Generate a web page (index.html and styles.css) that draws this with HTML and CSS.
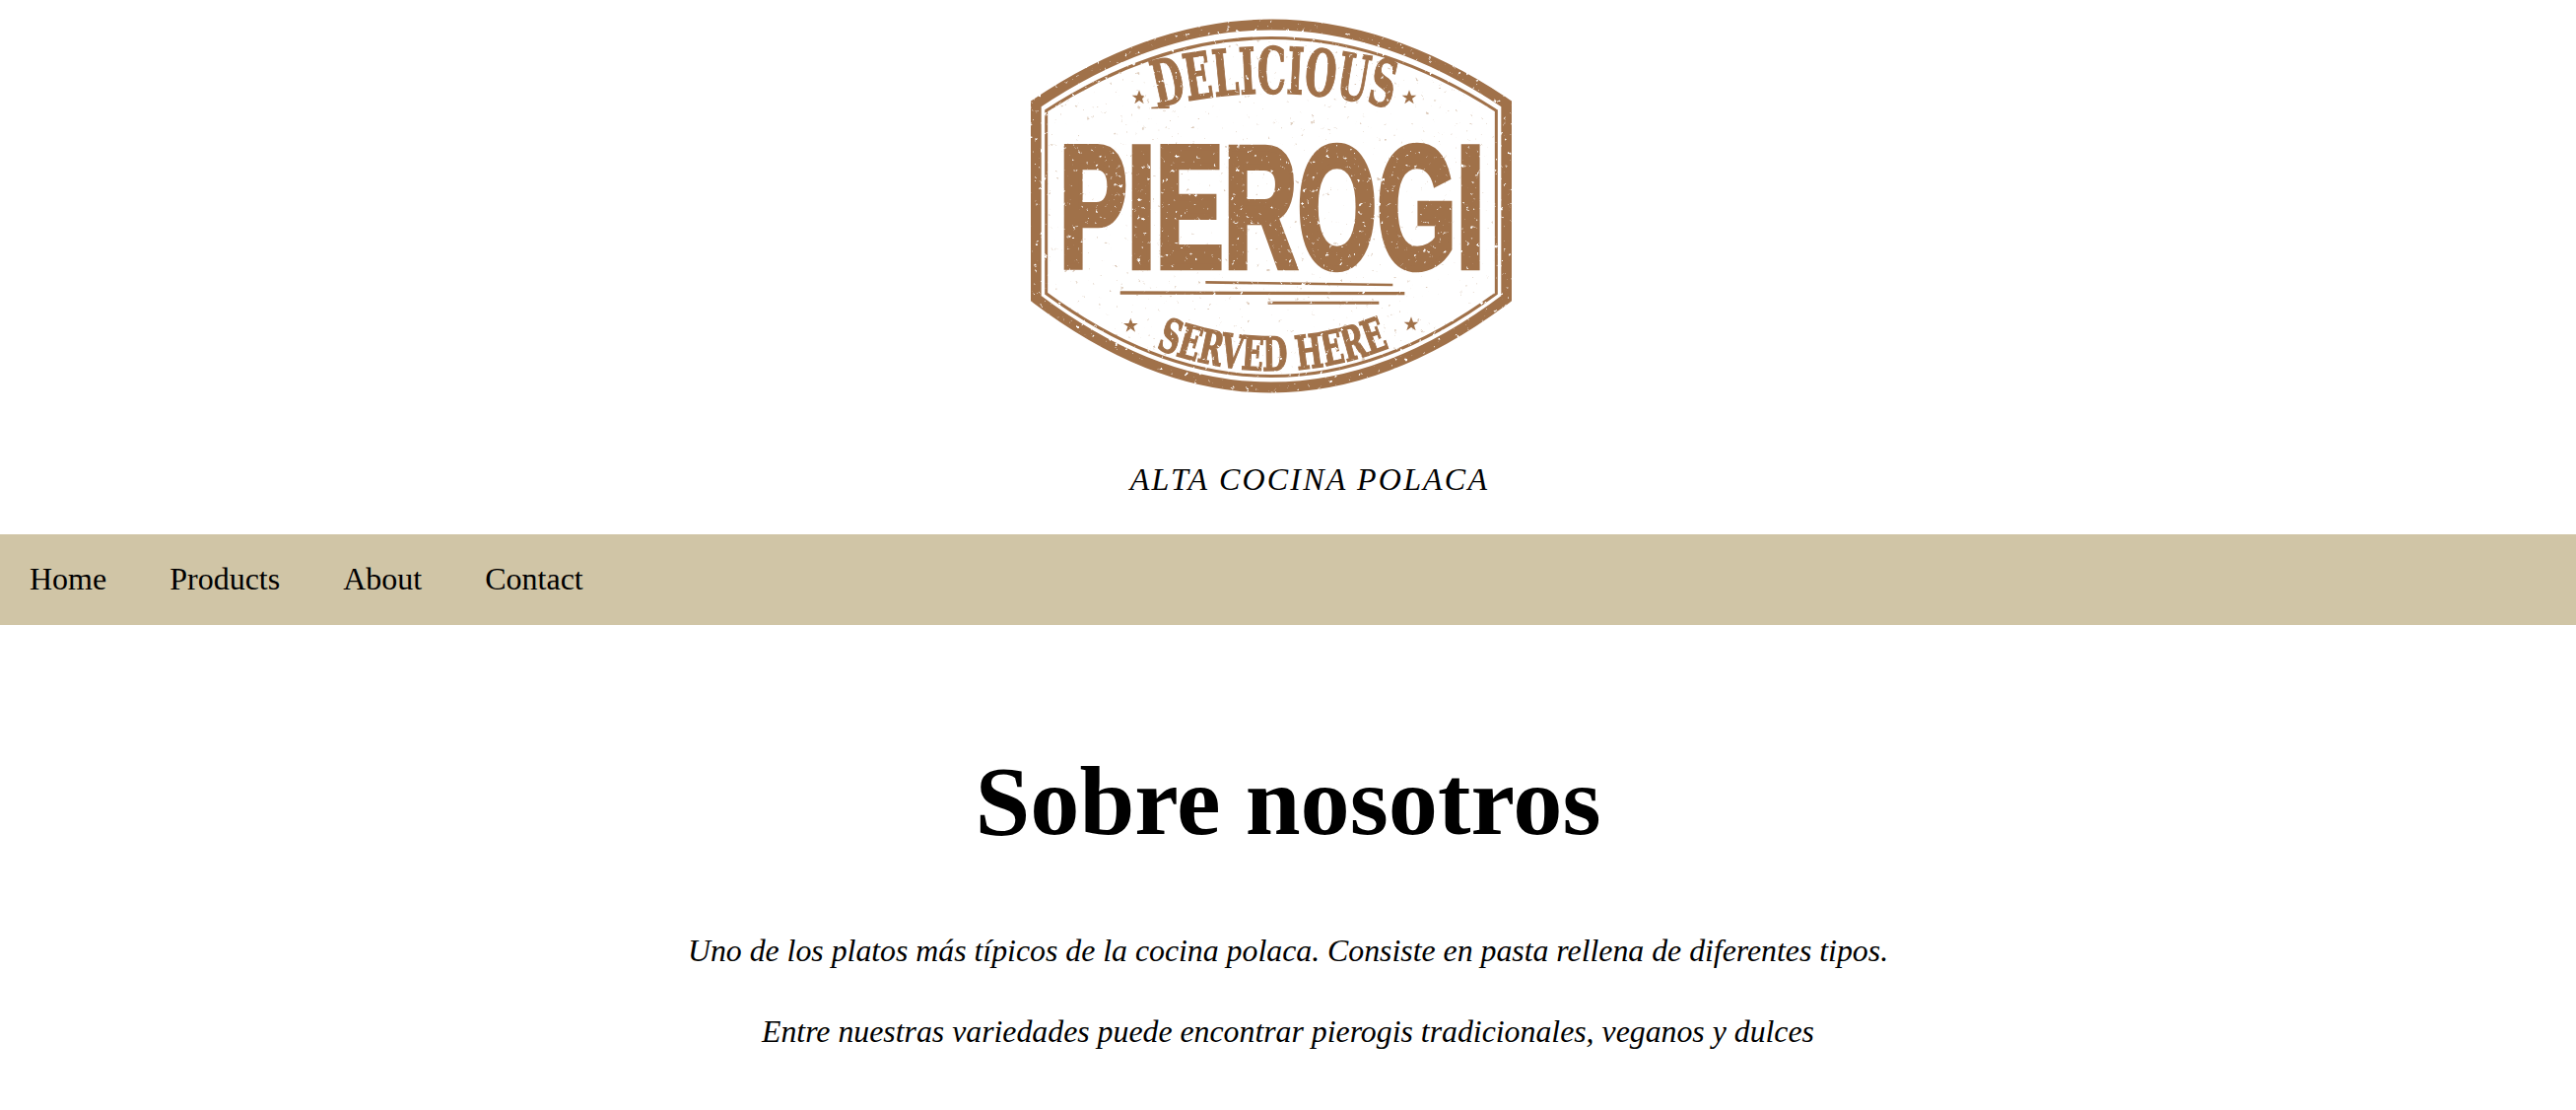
FILE: index.html
```html
<!DOCTYPE html>
<html lang="es">
<head>
<meta charset="utf-8">
<title>Pierogi</title>
<link rel="stylesheet" href="styles.css">
</head>
<body>
<header class="site-header">
  <svg class="logo" viewBox="0 0 1560 1260" role="img" aria-label="Delicious Pierogi served here">
    <defs>
      <filter id="distress" filterUnits="userSpaceOnUse" x="0" y="0" width="1560" height="1260">
        <feTurbulence type="fractalNoise" baseFrequency="0.07" numOctaves="4" seed="7" result="n"/>
        <feColorMatrix in="n" type="matrix" values="0 0 0 0 0  0 0 0 0 0  0 0 0 0 0  8 0 0 0 -5.5" result="holes"/>
        <feComposite in="SourceGraphic" in2="holes" operator="out"/>
        <feGaussianBlur stdDeviation="1.4"/>
      </filter>
      <filter id="specks" filterUnits="userSpaceOnUse" x="0" y="0" width="1560" height="1260">
        <feTurbulence type="fractalNoise" baseFrequency="0.06" numOctaves="4" seed="21"/>
        <feColorMatrix type="matrix" values="0 0 0 0 0.72  0 0 0 0 0.6  0 0 0 0 0.5  9 0 0 0 -6.6"/>
        <feComposite in2="SourceGraphic" operator="in"/>
        <feGaussianBlur stdDeviation="1.2"/>
      </filter>
      <path id="arc-top" d="M432 328 Q 790 238 1150 332"/>
      <path id="arc-bottom" d="M428 1060 Q 790 1198 1146 1056"/>
    </defs>
    <path class="logo-field" filter="url(#specks)" d="M92 335 Q 780 -110 1468 335 L1468 895 Q 780 1400 92 895 Z"/>
    <g class="logo-ink" filter="url(#distress)">
      <path class="logo-band" d="M64 316 Q 780 -166 1496 316 L1496 908 Q 780 1450 64 908 Z"/>
      <path class="logo-rule" d="M95 337 Q 780 -106 1465 337 L1465 893 Q 780 1396 95 893 Z"/>
      <text class="logo-arc-text logo-delicious"><textPath href="#arc-top" textLength="720" lengthAdjust="spacingAndGlyphs">DELICIOUS</textPath></text>
      <text class="logo-arc-text logo-served"><textPath href="#arc-bottom" textLength="730" lengthAdjust="spacingAndGlyphs">SERVED HERE</textPath></text>
      <text class="logo-main" x="134" y="813" textLength="1296" lengthAdjust="spacingAndGlyphs">PIEROGI</text>
      <polygon points="580,855 1150,863 1150,871 580,863"/>
      <polygon points="320,886 1186,888 1186,898 320,896"/>
      <polygon points="770,917 1108,917 1108,926 770,926"/>
      <polygon points="415,326 470,322 470,330 415,331"/>
      <polygon points="378,274 384,290 400,290 387,300 392,316 378,306 364,316 369,300 356,290 372,290"/>
      <polygon points="1200,274 1206,290 1222,290 1209,300 1214,316 1200,306 1186,316 1191,300 1178,290 1194,290"/>
      <polygon points="352,968 358,984 374,984 361,994 366,1010 352,1000 338,1010 343,994 330,984 346,984"/>
      <polygon points="1206,964 1212,980 1228,980 1215,990 1220,1006 1206,996 1192,1006 1197,990 1184,980 1200,980"/>
    </g>
  </svg>
  <p class="tagline">ALTA COCINA POLACA</p>
</header>
<nav class="main-nav">
  <a class="nav-link" href="#">Home</a>
  <a class="nav-link" href="#">Products</a>
  <a class="nav-link" href="#">About</a>
  <a class="nav-link" href="#">Contact</a>
</nav>
<main class="about">
  <h1 class="about-title">Sobre nosotros</h1>
  <p class="about-text">Uno de los platos más típicos de la cocina polaca. Consiste en pasta rellena de diferentes tipos.</p>
  <p class="about-text">Entre nuestras variedades puede encontrar pierogis tradicionales, veganos y dulces</p>
</main>
</body>
</html>
```

FILE: styles.css
```css
html, body {
  margin: 0;
  padding: 0;
  background: #ffffff;
  color: #000000;
  font-family: "Liberation Serif", "Times New Roman", serif;
}

.site-header {
  display: flex;
  flex-direction: column;
  align-items: center;
  height: 542px;
}

.logo {
  display: block;
  width: 520px;
  height: 420px;
  margin-right: 34px;
}

.logo-field { fill: #ffffff; }
.logo-ink { fill: #a0714a; }
.logo-band { fill: none; stroke: #a0714a; stroke-width: 32px; stroke-linejoin: miter; }
.logo-rule { fill: none; stroke: #a0714a; stroke-width: 9px; }

.logo-arc-text {
  font-family: "DejaVu Serif", "Liberation Serif", serif;
  font-weight: 700;
  stroke: #a0714a;
  stroke-width: 4px;
}
.logo-delicious { font-size: 195px; }
.logo-served { font-size: 142px; }

.logo-main {
  font-family: "Liberation Sans", Arial, sans-serif;
  font-weight: 700;
  font-size: 530px;
  stroke: #a0714a;
  stroke-width: 20px;
}

.tagline {
  margin: 46px 0 0 44px;
  font-size: 32px;
  line-height: 40px;
  font-style: italic;
  letter-spacing: 2.2px;
}

.main-nav {
  display: flex;
  gap: 64px;
  align-items: center;
  height: 92px;
  padding-left: 30px;
  padding-bottom: 2px;
  box-sizing: border-box;
  background: #d0c5a6;
}

.nav-link {
  color: #000000;
  font-size: 32px;
  text-decoration: none;
}

.about {
  padding-top: 120px;
  text-align: center;
}

.about-title {
  margin: 0 0 73px;
  font-size: 100.4px;
  line-height: 118px;
  font-weight: 700;
}

.about-text {
  margin: 0 0 42px;
  font-size: 31.8px;
  line-height: 40px;
  font-style: italic;
}
```
